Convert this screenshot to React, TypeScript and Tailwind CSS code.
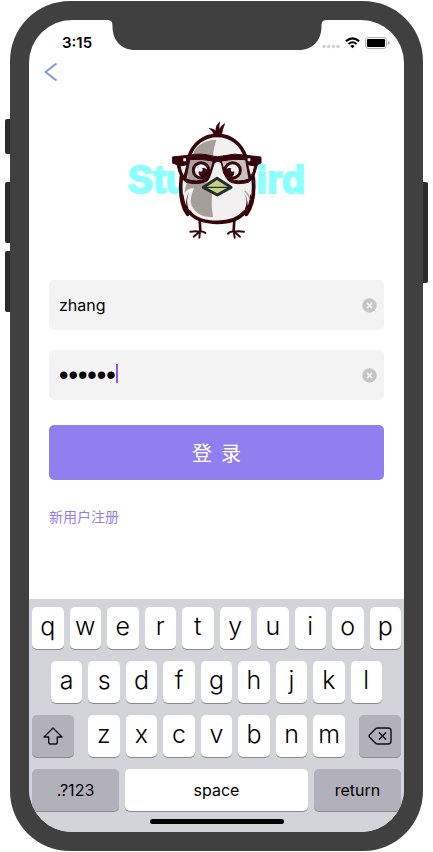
import { useState } from "react";

const TOP_ROW = ["q", "w", "e", "r", "t", "y", "u", "i", "o", "p"];
const HOME_ROW = ["a", "s", "d", "f", "g", "h", "j", "k", "l"];
const BOTTOM_ROW = ["z", "x", "c", "v", "b", "n", "m"];

function Notch() {
  return (
    <svg
      className="absolute left-1/2 -top-px -translate-x-1/2"
      width="219"
      height="31"
      viewBox="0 0 219 31"
      fill="#404040"
      aria-hidden="true"
    >
      <path d="M0 0V1C3.5 1 5 3 5 7C5 21 13 31 28 31H191C206 31 214 21 214 7C214 3 215.500 1 219 1V0Z" />
    </svg>
  );
}

function StatusBar() {
  return (
    <header className="flex h-[44px] items-center justify-between pt-[2px] pr-[14px] pl-[33px]">
      <span className="text-[15px] leading-5 font-semibold">3:15</span>
      <span className="flex items-center gap-[5px]">
        <svg width="18" height="12" viewBox="0 0 18 12" fill="#cfcfcf" aria-hidden="true">
          <circle cx="2" cy="9.500" r="1.700" />
          <circle cx="6.700" cy="9.500" r="1.700" />
          <circle cx="11.400" cy="9.500" r="1.700" />
          <circle cx="16" cy="9.500" r="1.700" />
        </svg>
        <svg width="15" height="12" viewBox="0 0 15 12" aria-label="Wi-Fi" role="img">
          <g fill="none" stroke="#000" strokeWidth="2.100">
            <path d="M.9 4.300Q7.500 -1.600 14.100 4.300" />
            <path d="M3.500 7Q7.500 3.500 11.500 7" />
          </g>
          <path d="M5.300 8.900Q7.500 7.100 9.700 8.900L7.500 11.300Z" />
        </svg>
        <svg width="25" height="12" viewBox="0 0 25 12" aria-label="Battery" role="img">
          <rect x=".6" y=".6" width="20.800" height="10.800" rx="2.600" fill="none" stroke="#a6a6a6" />
          <rect x="2" y="2" width="18" height="8" rx="1.200" />
          <path d="M22.800 4Q24.600 4.600 24.600 6T22.800 8Z" fill="#a6a6a6" />
        </svg>
      </span>
    </header>
  );
}

function Bird() {
  return (
    <svg
      className="relative col-start-1 row-start-1"
      width="90"
      height="120"
      viewBox="156 30 270 360"
      aria-hidden="true"
    >
      {/* legs and claws */}
      <g fill="none" stroke="#36060c" strokeLinecap="round" strokeLinejoin="round">
        <path strokeWidth="8" d="M239 330L241 362M343 330L341 362" />
        <path
          strokeWidth="6"
          d="M211 365Q228 362 239 365Q250 363 256 369M240 364L221 380M240 364L238 383M372 365Q355 362 342 365Q330 363 324 371M341 364L360 380M341 364L344 383"
        />
      </g>
      {/* tuft */}
      <path
        fill="#36060c"
        stroke="#36060c"
        strokeWidth="2"
        d="M281 76Q283 65 267 55Q282 57 287 63Q287 45 299 36Q295 48 298 60Q302 47 314 41Q308 55 304 76Z"
      />
      {/* body */}
      <path
        fill="#f2f0f1"
        stroke="#36060c"
        strokeWidth="11"
        strokeLinejoin="round"
        d="M292 76C250 76 219 103 207 140C188 166 182 195 182 230C182 262 187 292 203 313L208 306C226 330 256 337 293 337C331 337 356 328 374 306L379 313C395 292 401 262 401 230C401 195 395 166 377 140C364 103 334 76 292 76Z"
      />
      {/* shaded side */}
      <path fill="#a69e99" d="M289 90C255 88 224 108 216 139L279 140C280 122 284 106 289 90Z" />
      <path
        fill="#a69e99"
        d="M207 205Q245 218 268 207L252 229L276 253Q273 287 279 321C247 323 226 309 216 289C209 272 213 255 222 235Q206 232 193 249Q196 225 207 205Z"
      />
      {/* wings */}
      <path fill="#36060c" d="M209 243C200 262 198 278 208 302L203 317Q188 293 184 264L190 252Q194 276 199 288Q196 264 209 243Z" />
      <path fill="#36060c" d="M368 243C381 262 384 278 373 302L379 317Q394 293 398 264L391 252Q388 276 383 288Q384 264 368 243Z" />
      <path fill="none" stroke="#a69e99" strokeWidth="4" d="M374 243Q388 254 389 270" />
      {/* lenses */}
      <path fill="#aaa29e" d="M205 143H283L271 205Q235 225 201 211Z" />
      <path fill="#c8c1be" d="M303 143H379L386 211Q348 224 315 205Z" />
      <path fill="#f4f2f3" d="M177 164H204L198 207Q184 190 177 164ZM380 164H408Q402 190 388 207Z" />
      {/* eyes */}
      <circle cx="243" cy="181" r="23" fill="#f2f0f1" stroke="#36060c" strokeWidth="9" />
      <circle cx="338" cy="181" r="23" fill="#f2f0f1" stroke="#36060c" strokeWidth="9" />
      <circle cx="250" cy="188" r="14" fill="#36060c" />
      <circle cx="329" cy="188" r="14" fill="#36060c" />
      <circle cx="242" cy="179" r="6" fill="#f2f0f1" />
      <circle cx="338" cy="179" r="6" fill="#f2f0f1" />
      {/* glasses */}
      <path
        fill="#36060c"
        stroke="#36060c"
        strokeWidth="3"
        strokeLinejoin="round"
        d="M157 141L203 136Q245 128 276 138Q292 142 308 138Q345 128 378 136L423 141V159L412 164L406 186Q401 207 386 217Q348 227 326 213L311 190L304 158Q294 149 283 158L272 193L263 212Q235 227 198 217Q182 205 177 186L171 164L157 159ZM209 149L198 207Q232 219 257 206Q273 189 279 153Q242 145 209 149ZM304 153Q313 189 329 206Q355 219 387 207L377 149Q342 145 304 153ZM180 168Q183 188 192 199L201 164ZM404 168L383 164L392 199Q401 188 404 168Z"
        fillRule="evenodd"
      />
      <path fill="#f4f2f3" d="M190 145H198V154H190ZM383 145H391V154H383Z" />
      {/* beak */}
      <path fill="#c6d185" stroke="#292c2c" strokeWidth="9" strokeLinejoin="round" d="M291 205L333 232L292 255L250 232Z" />
      <path fill="none" stroke="#292c2c" strokeWidth="4" d="M258 232H326" />
    </svg>
  );
}

function ClearButton({ label, onClick }: { label: string; onClick: () => void }) {
  return (
    <button type="button" aria-label={label} onClick={onClick}>
      <svg width="15" height="15" viewBox="0 0 15 15" aria-hidden="true">
        <circle cx="7.500" cy="7.500" r="7.200" fill="#c5c5c5" />
        <path d="M4.900 4.900L10.100 10.100M10.100 4.900L4.900 10.100" stroke="#f3f3f3" strokeWidth="1.600" />
      </svg>
    </button>
  );
}

function LetterKey({ letter }: { letter: string }) {
  return (
    <button
      type="button"
      className="h-[42px] min-w-0 flex-1 rounded-[5px] bg-white pb-1 text-[25px] leading-[38px] font-light shadow-[0_1px_0_#898a8d]"
    >
      {letter}
    </button>
  );
}

function Keyboard() {
  return (
    <section
      aria-label="Keyboard"
      className="flex flex-col gap-3 bg-[#d3d4da] px-[3px] pt-2 pb-2"
    >
      <div className="flex gap-[6px]">
        {TOP_ROW.map((letter) => (
          <LetterKey key={letter} letter={letter} />
        ))}
      </div>
      <div className="flex gap-[6px] px-[19px]">
        {HOME_ROW.map((letter) => (
          <LetterKey key={letter} letter={letter} />
        ))}
      </div>
      <div className="flex gap-[14px]">
        <button
          type="button"
          aria-label="Shift"
          className="flex h-[42px] w-[42px] items-center justify-center rounded-[5px] bg-[#b2b0bb] shadow-[0_1px_0_#898a8d]"
        >
          <svg width="20" height="18" viewBox="0 0 20 18" fill="none" stroke="#111" strokeWidth="1.400" strokeLinejoin="round" aria-hidden="true">
            <path d="M10 1L19 10H14.300V15.500Q14.300 17 12.800 17H7.200Q5.700 17 5.700 15.500V10H1Z" />
          </svg>
        </button>
        <div className="flex flex-1 gap-[6px]">
          {BOTTOM_ROW.map((letter) => (
            <LetterKey key={letter} letter={letter} />
          ))}
        </div>
        <button
          type="button"
          aria-label="Delete"
          className="flex h-[42px] w-[42px] items-center justify-center rounded-[5px] bg-[#b2b0bb] shadow-[0_1px_0_#898a8d]"
        >
          <svg width="24" height="18" viewBox="0 0 24 18" fill="none" stroke="#111" strokeWidth="1.400" strokeLinejoin="round" aria-hidden="true">
            <path d="M9.500 1H20Q23 1 23 4V14Q23 17 20 17H9.500Q8.300 17 7.300 16L1.500 10Q.6 9 1.500 8L7.300 2Q8.300 1 9.500 1Z" />
            <path d="M11 5.500L18 12.500M18 5.500L11 12.500" />
          </svg>
        </button>
      </div>
      <div className="flex gap-[6px] text-[16px] leading-5">
        <button type="button" className="h-[42px] w-[87px] rounded-[5px] bg-[#b2b0bb] shadow-[0_1px_0_#898a8d]">
          .?123
        </button>
        <button type="button" className="h-[42px] flex-1 rounded-[5px] bg-white shadow-[0_1px_0_#898a8d]">
          space
        </button>
        <button type="button" className="h-[42px] w-[87px] rounded-[5px] bg-[#b2b0bb] shadow-[0_1px_0_#898a8d]">
          return
        </button>
      </div>
      <div className="-mt-1 h-[5px] w-[134px] self-center rounded-full bg-black" />
    </section>
  );
}

export default function App() {
  const [user, setUser] = useState("zhang");
  const [password, setPassword] = useState("123456");

  return (
    <div className="flex min-h-screen flex-col bg-white px-[10px] py-px font-['Inter','Noto_Sans_CJK_SC',sans-serif] text-black">
      <div className="relative flex flex-1 flex-col">
        {/* hardware buttons along the case */}
        <span className="absolute top-[118px] -left-[5px] h-[35px] w-[10px] rounded-[2px] bg-[#2b2b2b]" />
        <span className="absolute top-[181px] -left-[5px] h-[61px] w-[10px] rounded-[2px] bg-[#2b2b2b]" />
        <span className="absolute top-[250px] -left-[5px] h-[61px] w-[10px] rounded-[2px] bg-[#2b2b2b]" />
        <span className="absolute top-[181px] -right-[5px] h-[101px] w-[10px] rounded-[2px] bg-[#2b2b2b]" />

        <div className="relative flex flex-1 flex-col rounded-[60px] bg-[#404040] p-[19px]">
          <main className="relative flex flex-1 flex-col overflow-hidden rounded-[43px] bg-white">
            <StatusBar />
            <nav className="flex h-4 items-center pl-[15px]">
              <button type="button" aria-label="Back">
                <svg width="14" height="20" viewBox="0 0 14 20" fill="none" stroke="#769ada" strokeWidth="1.800" aria-hidden="true">
                  <path d="M12.500 1.500L1.500 10L12.500 18.500" />
                </svg>
              </button>
            </nav>

            <h1 className="mt-10 grid place-items-center font-['Liberation_Sans',Arial,sans-serif] text-[38px] leading-[60px] font-bold text-[#8cffff]">
              <span className="col-start-1 row-start-1 [-webkit-text-stroke:2px_#8cffff]">Studybird</span>
              <Bird />
            </h1>

            <form className="mt-10 flex flex-col px-5" onSubmit={(event) => event.preventDefault()}>
              <div className="flex h-[50px] items-center rounded-[5px] bg-[#f3f3f3] pr-[7px] pl-[10px]">
                <input
                  type="text"
                  aria-label="用户名"
                  value={user}
                  onChange={(event) => setUser(event.target.value)}
                  className="h-6 min-w-0 flex-1 bg-transparent text-[16px] leading-6 outline-none"
                />
                <ClearButton label="清除用户名" onClick={() => setUser("")} />
              </div>
              <div className="relative mt-5 flex h-[50px] items-center rounded-[5px] bg-[#f3f3f3] pr-[7px] pl-[10px]">
                <input
                  type="password"
                  aria-label="密码"
                  value={password}
                  onChange={(event) => setPassword(event.target.value)}
                  className="h-8 min-w-0 flex-1 bg-transparent font-['Liberation_Sans',Arial,sans-serif] text-[27px] leading-8 caret-[#8f58e8] outline-none"
                />
                <span className="absolute top-[14px] left-[67px] h-[19px] w-[2px] bg-[#8f58e8]" />
                <ClearButton label="清除密码" onClick={() => setPassword("")} />
              </div>
              <button
                type="submit"
                className="mt-[25px] h-[55px] rounded-[5px] bg-[#917ff0] font-['Noto_Sans_CJK_SC',sans-serif] text-[20px] leading-7 whitespace-pre text-white"
              >
                {"登  录"}
              </button>
              <a
                href="#register"
                className="mt-[26px] self-start font-['Noto_Sans_CJK_SC',sans-serif] text-[14px] leading-5 text-[#917ff0]"
              >
                新用户注册
              </a>
            </form>

            <div className="flex-1" />
            <Keyboard />
            <Notch />
          </main>
        </div>
      </div>
    </div>
  );
}
